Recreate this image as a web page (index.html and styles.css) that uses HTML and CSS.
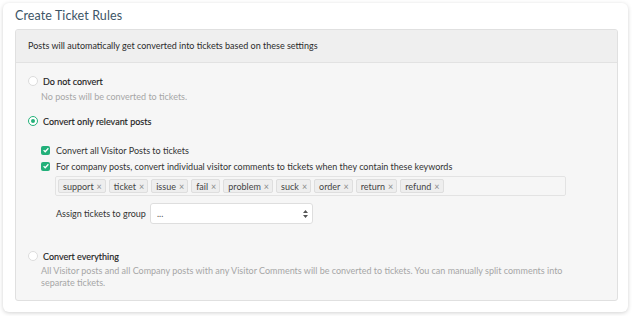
FILE: index.html
```html
<!DOCTYPE html>
<html lang="en">
<head>
  <meta charset="utf-8">
  <title>Create Ticket Rules</title>
  <link rel="stylesheet" href="styles.css">
</head>
<body>
  <section class="card">
    <h1 class="card__title">Create Ticket Rules</h1>

    <div class="panel">
      <div class="panel__head">Posts will automatically get converted into tickets based on these settings</div>

      <div class="panel__body">
        <div class="option">
          <label class="option__label"><span class="radio"></span>Do not convert</label>
          <p class="option__desc">No posts will be converted to tickets.</p>
        </div>

        <div class="option option--active">
          <label class="option__label"><span class="radio radio--checked"></span>Convert only relevant posts</label>

          <div class="sub">
            <label class="check"><span class="check__box"><svg viewBox="0 0 10 10" width="8" height="8"><path d="M2 5.2l2 2 4-4.4" fill="none" stroke="#fff" stroke-width="1.6"/></svg></span>Convert all Visitor Posts to tickets</label>
            <label class="check"><span class="check__box"><svg viewBox="0 0 10 10" width="8" height="8"><path d="M2 5.2l2 2 4-4.4" fill="none" stroke="#fff" stroke-width="1.6"/></svg></span>For company posts, convert individual visitor comments to tickets when they contain these keywords</label>

            <div class="tags">
              <span class="tag">support <i>×</i></span>
              <span class="tag">ticket <i>×</i></span>
              <span class="tag">issue <i>×</i></span>
              <span class="tag">fail <i>×</i></span>
              <span class="tag">problem <i>×</i></span>
              <span class="tag">suck <i>×</i></span>
              <span class="tag">order <i>×</i></span>
              <span class="tag">return <i>×</i></span>
              <span class="tag">refund <i>×</i></span>
            </div>

            <div class="group">
              <span class="group__label">Assign tickets to group</span>
              <div class="select">
                <span>...</span>
                <svg width="5" height="8" viewBox="0 0 5 8"><path d="M2.5 0L5 3H0z M2.5 8L0 5h5z" fill="#555"/></svg>
              </div>
            </div>
          </div>
        </div>

        <div class="option option--last">
          <label class="option__label"><span class="radio"></span>Convert everything</label>
          <p class="option__desc">All Visitor posts and all Company posts with any Visitor Comments will be converted to tickets. You can manually split comments into separate tickets.</p>
        </div>
      </div>
    </div>
  </section>
</body>
</html>
```

FILE: styles.css
```css
* {
  box-sizing: border-box;
  margin: 0;
  padding: 0;
}

body {
  background: #ffffff;
  font-family: "Lato", "Open Sans", sans-serif;
  font-size: 9px;
  color: #333333;
  padding: 3px 5px 4px 3px;
}

.card {
  background: #ffffff;
  border-radius: 6px;
  box-shadow: 0 1px 4px rgba(0, 0, 0, 0.18);
  padding: 5px 10px 12px 12px;
  height: 309px;
}

.card__title {
  font-size: 12.5px;
  font-weight: 400;
  color: #3d5566;
  line-height: 16px;
  margin: 0 0 5px;
  letter-spacing: 0.1px;
}

.panel {
  border: 1px solid #e0e0e0;
  border-radius: 3px;
  background: #f6f6f6;
  overflow: hidden;
}

.panel__head {
  background: #efefef;
  border-bottom: 1px solid #e2e2e2;
  padding: 0 12px;
  height: 33px;
  line-height: 32px;
  font-size: 9px;
  color: #2b2b2b;
}

.panel__body {
  padding: 11px 0 11px 25px;
}

.option__label {
  display: flex;
  align-items: center;
  gap: 5px;
  height: 14px;
  font-size: 9px;
  color: #1e1e1e;
  margin-left: -13px;
  -webkit-text-stroke: 0.15px #1e1e1e;
}

.radio {
  width: 10px;
  height: 10px;
  border-radius: 50%;
  background: #fff;
  border: 1px solid #dcdcdc;
  flex: none;
}

.radio--checked {
  border: 1.5px solid #25b27a;
  position: relative;
}

.radio--checked::after {
  content: "";
  position: absolute;
  left: 1.5px;
  top: 1.5px;
  width: 4px;
  height: 4px;
  border-radius: 50%;
  background: #25b27a;
}

.option__desc {
  font-size: 9px;
  color: #a6a6a6;
  line-height: 12px;
  margin-top: 3px;
  padding-right: 22px;
}

.option {
  margin-bottom: 11px;
}

.option--active {
  margin-bottom: 25px;
}

.option--last {
  margin-bottom: 0;
}

.option--last .option__desc {
  margin-top: 2px;
}

.sub {
  padding-top: 14px;
}

.check {
  display: flex;
  align-items: center;
  gap: 6px;
  height: 16px;
  color: #333;
  font-size: 9px;
}

.check__box {
  width: 9px;
  height: 9px;
  border-radius: 2px;
  background: #22b07a;
  display: flex;
  align-items: center;
  justify-content: center;
  flex: none;
}

.tags {
  display: flex;
  gap: 3px;
  margin: 2px 0 0 14px;
  width: 511px;
  height: 20px;
  padding: 2px;
  background: #f6f6f6;
  border: 1px solid #e3e3e3;
  border-radius: 2px;
}

.tag {
  display: flex;
  align-items: center;
  gap: 3px;
  height: 14px;
  padding: 0 3px 0 4px;
  background: #eeeeee;
  border: 1px solid #dedede;
  border-radius: 2px;
  font-size: 9px;
  color: #444;
}

.tag i {
  font-style: normal;
  color: #8a8a8a;
  font-size: 9px;
}

.group {
  display: flex;
  align-items: center;
  gap: 4px;
  margin: 7px 0 0 15px;
}

.group__label {
  font-size: 9px;
  color: #333;
}

.select {
  width: 163px;
  height: 21px;
  background: #ffffff;
  border: 1px solid #dedede;
  border-radius: 3px;
  display: flex;
  align-items: center;
  justify-content: space-between;
  padding: 0 4px 0 6px;
  color: #555;
}
```
